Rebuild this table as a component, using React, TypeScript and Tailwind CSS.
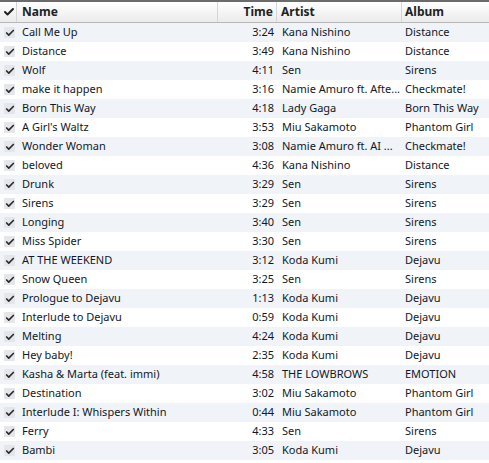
import { Check } from "lucide-react";

const SONGS = [
  ["Call Me Up", "3:24", "Kana Nishino", "Distance"],
  ["Distance", "3:49", "Kana Nishino", "Distance"],
  ["Wolf", "4:11", "Sen", "Sirens"],
  ["make it happen", "3:16", "Namie Amuro ft. Afte...", "Checkmate!"],
  ["Born This Way", "4:18", "Lady Gaga", "Born This Way"],
  ["A Girl's Waltz", "3:53", "Miu Sakamoto", "Phantom Girl"],
  ["Wonder Woman", "3:08", "Namie Amuro ft. AI ...", "Checkmate!"],
  ["beloved", "4:36", "Kana Nishino", "Distance"],
  ["Drunk", "3:29", "Sen", "Sirens"],
  ["Sirens", "3:29", "Sen", "Sirens"],
  ["Longing", "3:40", "Sen", "Sirens"],
  ["Miss Spider", "3:30", "Sen", "Sirens"],
  ["AT THE WEEKEND", "3:12", "Koda Kumi", "Dejavu"],
  ["Snow Queen", "3:25", "Sen", "Sirens"],
  ["Prologue to Dejavu", "1:13", "Koda Kumi", "Dejavu"],
  ["Interlude to Dejavu", "0:59", "Koda Kumi", "Dejavu"],
  ["Melting", "4:24", "Koda Kumi", "Dejavu"],
  ["Hey baby!", "2:35", "Koda Kumi", "Dejavu"],
  ["Kasha & Marta (feat. immi)", "4:58", "THE LOWBROWS", "EMOTION"],
  ["Destination", "3:02", "Miu Sakamoto", "Phantom Girl"],
  ["Interlude I: Whispers Within", "0:44", "Miu Sakamoto", "Phantom Girl"],
  ["Ferry", "4:33", "Sen", "Sirens"],
  ["Bambi", "3:05", "Koda Kumi", "Dejavu"],
];

function Tick() {
  return (
    <span className="flex h-[11px] w-[11px] items-center justify-center rounded-[1px] bg-[#e4e6ea]">
      <Check className="h-[10px] w-[10px] text-[#2a2a2a]" strokeWidth={4} />
    </span>
  );
}

export default function App() {
  return (
    <div className="h-[463px] w-[489px] overflow-hidden bg-white font-['Noto_Sans',sans-serif] text-[11px] text-[#111827]">
      {/* header */}
      <div className="flex h-[23px] border-t-2 border-b border-t-[#6b6b6b] border-b-[#b9b9b9] bg-gradient-to-b from-white to-[#ebebeb] text-[12px] font-bold text-[#222]">
        <div className="flex w-[17px] items-center justify-center border-r border-[#d6d6d6] pl-[2px]">
          <Check className="h-[12px] w-[12px]" strokeWidth={4} />
        </div>
        <div className="flex w-[201px] items-center border-r border-[#d6d6d6] pl-[5px]">Name</div>
        <div className="flex w-[59px] items-center justify-end border-r border-[#d6d6d6] pr-[3px]">Time</div>
        <div className="flex w-[125px] items-center border-r border-[#d6d6d6] pl-[4px]">Artist</div>
        <div className="flex flex-1 items-center pl-[3px]">Album</div>
      </div>

      {SONGS.map(([name, time, artist, album], i) => (
        <div key={i} className={`flex h-[19px] items-center ${i % 2 === 0 ? "bg-[#f0f3f8]" : "bg-white"}`}>
          <div className="flex w-[17px] justify-center pl-[2px]">
            <Tick />
          </div>
          <div className="w-[201px] truncate pl-[5px]">{name}</div>
          <div className="w-[59px] pr-[3px] text-right">{time}</div>
          <div className="w-[125px] overflow-hidden whitespace-nowrap pl-[5px]">{artist}</div>
          <div className="min-w-0 flex-1 truncate pl-[3px]">{album}</div>
        </div>
      ))}
    </div>
  );
}
